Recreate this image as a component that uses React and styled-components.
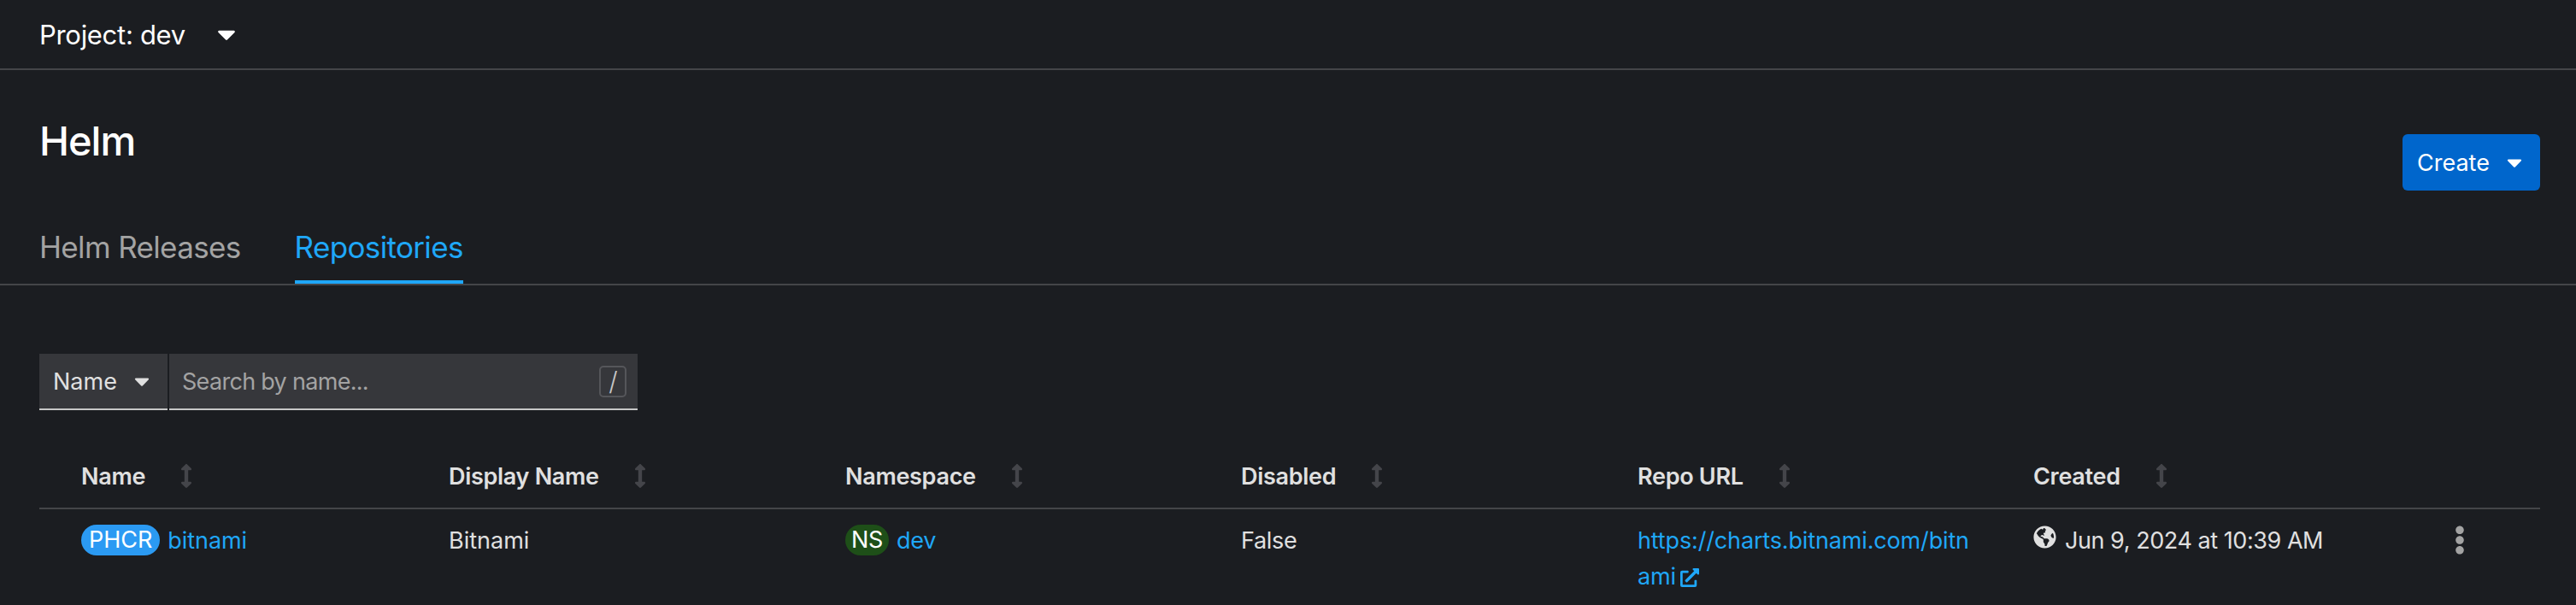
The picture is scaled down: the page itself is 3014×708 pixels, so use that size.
import React from 'react';
import styled, { createGlobalStyle } from 'styled-components';
import { FaCaretDown, FaArrowsAltV, FaGlobeAmericas, FaExternalLinkAlt, FaEllipsisV } from 'react-icons/fa';

const GlobalStyle = createGlobalStyle`
  html, body {
    margin: 0;
    background: #1b1d21;
    overflow: hidden;
  }
  body {
    font-family: Inter, "Liberation Sans", sans-serif;
    color: #e0e0e0;
  }
`;

const Page = styled.div`
  width: 3014px;
  height: 708px;
  overflow: hidden;
`;

const ProjectBar = styled.div`
  height: 80px;
  display: flex;
  align-items: center;
  gap: 31px;
  padding: 0 46px;
  border-bottom: 2px solid #444548;
  font-size: 31px;
  letter-spacing: -0.3px;
  color: #fff;
`;

const Caret = styled(FaCaretDown)`
  width: ${(p) => p.$size}px;
  height: ${(p) => p.$size}px;
  color: ${(p) => p.$color || '#fff'};
  flex-shrink: 0;
`;

const Header = styled.div`
  height: 178px;
  box-sizing: border-box;
  display: flex;
  justify-content: space-between;
  align-items: flex-start;
  padding: 54px 42px 0 46px;
`;

const Title = styled.h1`
  margin: 0;
  font-size: 47px;
  line-height: 58px;
  font-weight: 500;
  letter-spacing: -1px;
  color: #fff;
`;

const CreateButton = styled.button`
  width: 161px;
  height: 66px;
  margin-top: 21px;
  border: 0;
  border-radius: 6px;
  background: #06c;
  color: #fff;
  font: inherit;
  font-size: 27px;
  display: flex;
  align-items: center;
  justify-content: space-between;
  padding: 0 16px 0 17px;
`;

const Tabs = styled.div`
  height: 72px;
  display: flex;
  gap: 63px;
  padding-left: 46px;
  border-bottom: 2px solid #444548;
`;

const Tab = styled.div`
  height: 72px;
  box-sizing: border-box;
  padding-top: 7px;
  font-size: 35px;
  line-height: 44px;
  letter-spacing: -0.65px;
  color: ${(p) => (p.$active ? '#1fa7f8' : '#a3a3a3')};
  border-bottom: 4px solid ${(p) => (p.$active ? '#1fa7f8' : 'transparent')};
`;

const FilterBar = styled.div`
  margin: 80px 0 0 46px;
  width: 700px;
  height: 66px;
  display: flex;
  gap: 2px;
  font-size: 27px;
`;

const FilterSelect = styled.div`
  width: 150px;
  box-sizing: border-box;
  display: flex;
  align-items: center;
  justify-content: space-between;
  padding: 0 16px;
  background: #36373b;
  border-bottom: 2px solid #c7c7c7;
  color: #e0e0e0;
`;

const SearchBox = styled.div`
  flex: 1;
  box-sizing: border-box;
  display: flex;
  align-items: center;
  justify-content: space-between;
  padding: 0 13px 0 15px;
  background: #36373b;
  border-bottom: 2px solid #c7c7c7;
  color: #a3a3a3;
  letter-spacing: -0.7px;
`;

const SlashKey = styled.span`
  width: 32px;
  height: 37px;
  box-sizing: border-box;
  display: flex;
  align-items: center;
  justify-content: center;
  border: 2px solid #55565a;
  border-radius: 5px;
  font-size: 30px;
  font-weight: 300;
  color: #c7c7c7;
`;

const Table = styled.div`
  margin: 0 42px 0 46px;
`;

const columns = '430px 464px 463px 464px 463px 486px 1fr';

const HeadRow = styled.div`
  height: 116px;
  box-sizing: border-box;
  display: grid;
  grid-template-columns: ${columns};
  align-items: center;
  padding: 40px 0 0 49px;
  border-bottom: 2px solid #444548;
`;

const HeadCell = styled.div`
  display: flex;
  align-items: center;
  gap: 41px;
  font-size: 27px;
  font-weight: 600;
  letter-spacing: -0.3px;
  color: #e0e0e0;
`;

const SortIcon = styled(FaArrowsAltV)`
  width: 14px;
  height: 28px;
  color: #44454a;
`;

const BodyRow = styled.div`
  display: grid;
  grid-template-columns: ${columns};
  padding: 16px 0 0 49px;
  font-size: 27px;
  line-height: 42px;
  letter-spacing: -0.3px;
`;

const Cell = styled.div`
  display: flex;
  align-items: flex-start;
  gap: ${(p) => p.$gap || 0}px;
  letter-spacing: ${(p) => p.$spacing ?? -0.3}px;
`;

const Badge = styled.span`
  height: 36px;
  margin-top: 2px;
  padding: 0 ${(p) => p.$pad}px;
  display: inline-flex;
  align-items: center;
  border-radius: 18px;
  background: ${(p) => p.$bg};
  color: #fff;
  font-size: 27px;
  line-height: 36px;
`;

const Link = styled.a`
  color: #1fa7f8;
  text-decoration: none;
`;

const UrlLink = styled(Link)`
  width: 392px;
  word-break: break-all;
`;

const ExternalIcon = styled(FaExternalLinkAlt)`
  width: 22px;
  height: 22px;
  margin-left: 5px;
  vertical-align: -3px;
`;

const GlobeIcon = styled(FaGlobeAmericas)`
  width: 27px;
  height: 27px;
  margin-top: 3px;
  color: #e0e0e0;
  flex-shrink: 0;
`;

const KebabIcon = styled(FaEllipsisV)`
  width: 26px;
  height: 34px;
  margin-top: 3px;
  color: #a3a3a3;
`;

const headers = ['Name', 'Display Name', 'Namespace', 'Disabled', 'Repo URL', 'Created'];

const App = () => (
  <Page>
    <GlobalStyle />
    <ProjectBar>
      <span>Project: dev</span>
      <Caret $size={34} />
    </ProjectBar>
    <Header>
      <Title>Helm</Title>
      <CreateButton>
        Create
        <Caret $size={28} />
      </CreateButton>
    </Header>
    <Tabs>
      <Tab>Helm Releases</Tab>
      <Tab $active>Repositories</Tab>
    </Tabs>
    <FilterBar>
      <FilterSelect>
        Name
        <Caret $size={28} $color="#e0e0e0" />
      </FilterSelect>
      <SearchBox>
        Search by name...
        <SlashKey>/</SlashKey>
      </SearchBox>
    </FilterBar>
    <Table>
      <HeadRow>
        {headers.map((label) => (
          <HeadCell key={label}>
            {label}
            <SortIcon />
          </HeadCell>
        ))}
      </HeadRow>
      <BodyRow>
        <Cell $gap={9} $spacing={-0.05}>
          <Badge $bg="#2b9af3" $pad={9}>PHCR</Badge>
          <Link>bitnami</Link>
        </Cell>
        <Cell $spacing={0}>Bitnami</Cell>
        <Cell $gap={9}>
          <Badge $bg="#1e4f18" $pad={7}>NS</Badge>
          <Link>dev</Link>
        </Cell>
        <Cell>False</Cell>
        <Cell $spacing={-0.15}>
          <UrlLink>
            https://charts.bitnami.com/bitnami
            <ExternalIcon />
          </UrlLink>
        </Cell>
        <Cell $gap={10} $spacing={-0.45}>
          <GlobeIcon />
          Jun 9, 2024 at 10:39 AM
        </Cell>
        <Cell>
          <KebabIcon />
        </Cell>
      </BodyRow>
    </Table>
  </Page>
);

export default App;
